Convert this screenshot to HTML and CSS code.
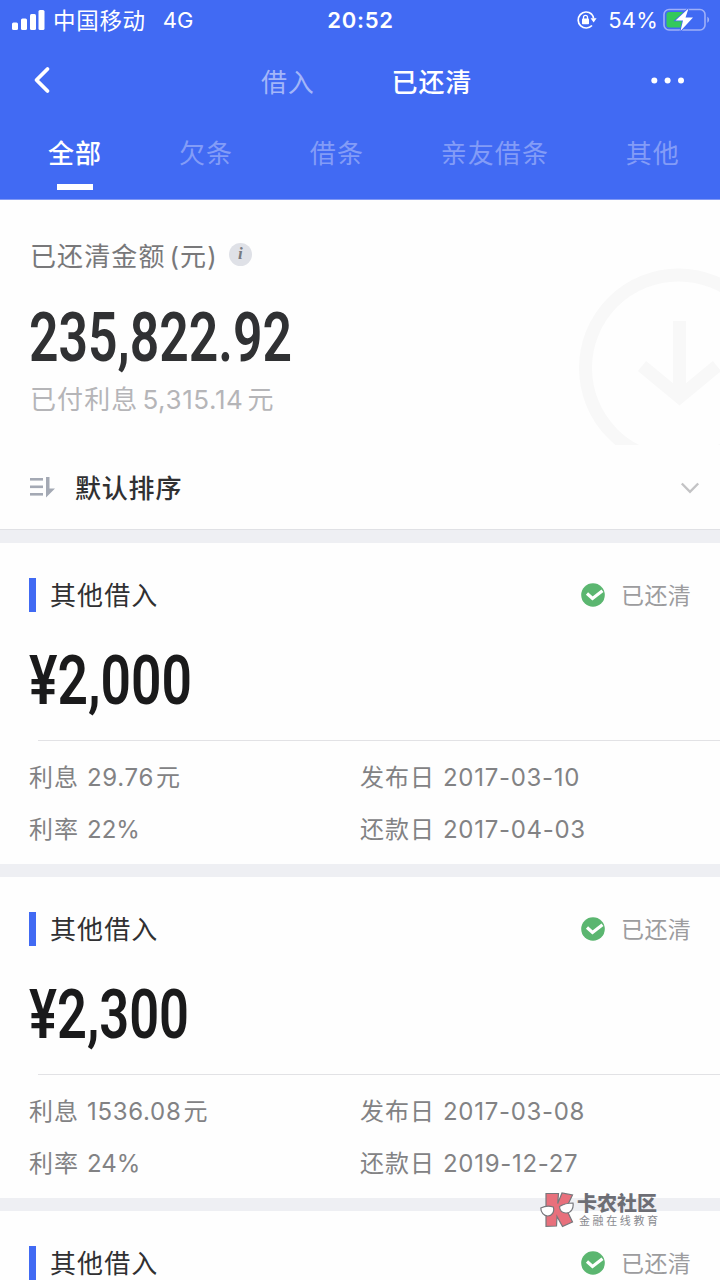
FILE: index.html
```html
<!DOCTYPE html>
<html lang="zh-CN">
<head>
<meta charset="utf-8">
<title>已还清</title>
<link rel="stylesheet" href="styles.css">
</head>
<body>
<div class="screen">
  <header class="header">
    <div class="status">
      <div class="status-left">
        <svg class="signal" width="33" height="21" viewBox="0 0 33 21"><g fill="#fff"><rect x="0" y="12.500" width="6" height="7.500" rx="1.500"/><rect x="9" y="8.500" width="6" height="11.500" rx="1.500"/><rect x="18" y="4" width="6" height="16" rx="1.500"/><rect x="26.500" y="0" width="6" height="20" rx="1.500"/></g></svg>
        <span class="carrier">中国移动</span><span class="net">4G</span>
      </div>
      <div class="clock">20:52</div>
      <div class="status-right">
        <svg width="21" height="20" viewBox="0 0 21 20"><path d="M15.500 4A8 8 0 1 0 16 15.500M15.500 4A8 8 0 0 1 17.600 8.500" fill="none" stroke="#fff" stroke-width="1.700"/><path d="M14.600 8.300h6l-3 4.200z" fill="#fff"/><rect x="6" y="8.600" width="7" height="5.600" rx=".8" fill="#fff"/><path d="M7.500 9V7.300a2 2 0 0 1 4 0V9" fill="none" stroke="#fff" stroke-width="1.300"/></svg>
        <span class="percent">54%</span>
        <svg width="48" height="24" viewBox="0 0 48 24"><rect x="1" y="1.500" width="41" height="20.500" rx="5" fill="none" stroke="#9fb0f8" stroke-width="1.600"/><path d="M44.300 8.800c2.400.8 2.400 5.200 0 6z" fill="#9fb0f8"/><rect x="3.500" y="4" width="17.500" height="15.500" rx="2.500" fill="#34c95c"/><path d="M25.500 .5L12.500 12.500h7.500L17.500 23 30 9.500h-7.500z" fill="#fff" stroke="#416af3" stroke-width="1.600" paint-order="stroke"/></svg>
      </div>
    </div>
    <nav class="nav">
      <svg class="back" width="18" height="28" viewBox="0 0 18 28"><path d="M14.500 3L3.500 14l11 11" fill="none" stroke="#fff" stroke-width="3.800" stroke-linecap="round" stroke-linejoin="round"/></svg>
      <div class="nav-titles"><span class="nav-item">借入</span><span class="nav-item active">已还清</span></div>
      <svg class="more" width="34" height="8" viewBox="0 0 34 8"><g fill="#fff"><circle cx="3.300" cy="4.500" r="3"/><circle cx="16.600" cy="4.500" r="3"/><circle cx="30" cy="4.500" r="3"/></g></svg>
    </nav>
    <div class="tabs"><span class="tab on">全部</span><span class="tab">欠条</span><span class="tab">借条</span><span class="tab">亲友借条</span><span class="tab">其他</span></div>
  </header>

  <section class="summary">
    <svg class="summary-art" width="142" height="178" viewBox="0 0 142 178"><g fill="none" stroke="#f8f8f8" stroke-width="13"><circle cx="100.500" cy="101" r="93"/><path d="M101.500 54v77M64 99l37.500 31L139 99"/></g></svg>
    <div class="summary-label"><span>已还清金额</span><span class="unit">(元)</span><span class="info">i</span></div>
    <svg class="total" width="290" height="98" viewBox="0 0 290 98"><text x="4" y="71" textLength="263" lengthAdjust="spacingAndGlyphs">235,822.92</text></svg>
    <div class="paid"><span>已付利息</span><span class="paid-num">5,315.14</span><span>元</span></div>
  </section>

  <div class="sort">
    <svg width="28" height="22" viewBox="0 0 28 22"><g fill="#a4a9b4"><rect x="1" y="1" width="13" height="2.600"/><rect x="1" y="8.500" width="13" height="2.600"/><rect x="1" y="16" width="13" height="2.600"/><path d="M17 0h3.500v11.500H26L17 20.500z"/></g></svg>
    <span class="sort-name">默认排序</span>
    <svg class="chev" width="20" height="14" viewBox="0 0 20 14"><path d="M1.800 2.500L10 10.800l8.200-8.300" fill="none" stroke="#c3c3c5" stroke-width="2.400"/></svg>
  </div>

  <main class="list">
    <article class="card">
      <div class="card-head"><span class="bar"></span><span class="card-title">其他借入</span>
        <svg width="25" height="25" viewBox="0 0 25 25"><circle cx="12" cy="12" r="11.800" fill="#5bb670"/><path d="M6 10.500l5.500 5 10-7.800" fill="none" stroke="#fff" stroke-width="3.200"/></svg>
        <span class="state">已还清</span></div>
      <svg class="amount" width="240" height="119" viewBox="0 0 240 119"><text x="4" y="83" textLength="163" lengthAdjust="spacingAndGlyphs">¥2,000</text></svg>
      <div class="details">
        <div>利息<span class="num">29.76</span>元</div><div>发布日<span class="num">2017-03-10</span></div>
        <div>利率<span class="num pct">22%</span></div><div>还款日<span class="num">2017-04-03</span></div>
      </div>
    </article>
    <article class="card">
      <div class="card-head"><span class="bar"></span><span class="card-title">其他借入</span>
        <svg width="25" height="25" viewBox="0 0 25 25"><circle cx="12" cy="12" r="11.800" fill="#5bb670"/><path d="M6 10.500l5.500 5 10-7.800" fill="none" stroke="#fff" stroke-width="3.200"/></svg>
        <span class="state">已还清</span></div>
      <svg class="amount" width="240" height="119" viewBox="0 0 240 119"><text x="4" y="83" textLength="160" lengthAdjust="spacingAndGlyphs">¥2,300</text></svg>
      <div class="details">
        <div>利息<span class="num">1536.08</span>元</div><div>发布日<span class="num">2017-03-08</span></div>
        <div>利率<span class="num pct">24%</span></div><div>还款日<span class="num">2019-12-27</span></div>
      </div>
    </article>
    <article class="card">
      <div class="card-head"><span class="bar"></span><span class="card-title">其他借入</span>
        <svg width="25" height="25" viewBox="0 0 25 25"><circle cx="12" cy="12" r="11.800" fill="#5bb670"/><path d="M6 10.500l5.500 5 10-7.800" fill="none" stroke="#fff" stroke-width="3.200"/></svg>
        <span class="state">已还清</span></div>
    </article>
  </main>

  <div class="watermark">
    <svg width="34" height="36" viewBox="0 0 34 36"><path d="M6 1.500h12.500l-.8 10L22 1l10.500 2-6.500 13.500L32.500 30l-10 4.500-5.500-10-.5 9.500-10.500.3z" fill="#e8707c" stroke="#77777c" stroke-width="1.200"/><path d="M.8 16c4-2 8-2.500 12.500-1 1.500 5-1.500 9-5.500 9S.8 20.500.8 16zM19.500 14.500c4-2.500 8.500-3.500 13.500-3.500.8 5-1.500 9.500-6.500 10-4.500.3-7-2.500-7-6.500z" fill="#fff" stroke="#77777c" stroke-width="1.200"/></svg>
    <div class="wm-text"><span class="wm-name">卡农社区</span><span class="wm-sub">金融在线教育</span></div>
  </div>
</div>
</body>
</html>
```
FILE: styles.css
```css
* { box-sizing: border-box; }
body {
  margin: 0;
  font-family: Inter, "Noto Sans CJK SC", sans-serif;
  background: #fefefe;
}
svg { display: block; flex: none; }
.screen {
  position: relative;
  width: 720px;
  height: 1280px;
  overflow: hidden;
  white-space: nowrap;
}
.header { height: 200px; background: #416af3; color: #fff; border-bottom: 1px solid #8299f4; }

.status {
  height: 40px;
  display: grid;
  grid-template-columns: 1fr auto 1fr;
  align-items: center;
  padding: 0 9px 0 12px;
}
.status-left { display: flex; align-items: center; font-size: 22.500px; }
.carrier { margin-left: 8px; padding-bottom: 2px; letter-spacing: .7px; }
.net { margin-left: 17px; font-size: 22px; }
.clock { margin-left: -2px; font-size: 22px; font-weight: 600; letter-spacing: .7px; }
.status-right { display: flex; align-items: center; justify-content: flex-end; }
.percent { margin: 0 5px 0 11px; font-size: 22px; letter-spacing: .2px; }

.nav { height: 80px; display: flex; align-items: center; padding: 0 35px 0 33px; }
.nav-titles { flex: 1; display: flex; gap: 77px; padding-left: 210px; }
.nav-item { font-size: 26px; letter-spacing: .8px; color: #a3b6f9; }
.nav-item.active { color: #fff; font-weight: 500; }

.tabs {
  height: 79px;
  display: flex;
  justify-content: space-between;
  padding: 13px 40px 0 48px;
}
.tab {
  position: relative;
  height: 42px;
  line-height: 42px;
  font-size: 26px;
  letter-spacing: 1.100px;
  color: #839cf7;
}
.tab.on { color: #fff; font-weight: 500; }
.tab.on::after {
  content: "";
  position: absolute;
  left: 9px;
  top: 51px;
  width: 36px;
  height: 6px;
  background: #fff;
}

.summary { position: relative; height: 245px; padding: 35px 0 0 30px; }
.summary-art { position: absolute; right: 0; top: 67px; }
.summary-label {
  height: 39px;
  display: flex;
  align-items: center;
  font-size: 26px;
  letter-spacing: 1.100px;
  color: #78787a;
}
.unit { margin-left: 4px; }
.info {
  width: 23px;
  height: 23px;
  margin-left: 11px;
  border-radius: 50%;
  background: #dfe1e7;
  color: #77797f;
  font: italic bold 17px/22px "Liberation Serif", serif;
  letter-spacing: 0;
  text-align: center;
}
.total { margin: 16px 0 0 -5px; }
.total text, .amount text { font-family: Roboto, sans-serif; font-size: 69px; font-weight: 600; fill: #303133; }
.amount text { fill: #1a1a1b; }
.paid {
  height: 40px;
  margin-top: -8px;
  line-height: 40px;
  font-size: 26px;
  letter-spacing: 1.100px;
  color: #b5b5b8;
}
.paid-num { margin: 0 4px 0 4px; letter-spacing: .6px; }

.sort {
  height: 85px;
  display: flex;
  align-items: center;
  padding: 2px 20px 0 29px;
  border-bottom: 1px solid #e0e1e5;
}
.sort-name { flex: 1; margin-left: 18px; padding-bottom: 3px; font-size: 26px; letter-spacing: .8px; font-weight: 500; color: #303032; }

.list {
  display: flex;
  flex-direction: column;
  gap: 13px;
  padding-top: 13px;
  background: #eeeff3;
}
.card { height: 321px; padding-top: 26px; background: #fefefe; }
.card-head { height: 52px; display: flex; align-items: center; padding: 0 29px; }
.bar { width: 7px; height: 34px; background: #416af3; }
.card-title { flex: 1; margin-left: 14px; padding-bottom: 3px; font-size: 26px; letter-spacing: 1.100px; color: #303032; }
.state { width: 70px; margin-left: 14px; padding-bottom: 2px; font-size: 23px; letter-spacing: .4px; color: #9c9c9e; }
.card-head svg { margin-right: 1px; }
.amount { margin-left: 25px; }
.details {
  height: 123px;
  margin-left: 38px;
  border-top: 1px solid #e2e2e5;
  display: grid;
  grid-template-columns: 331px 1fr;
  grid-auto-rows: 52px;
  align-items: center;
  padding-top: 8px;
  font-size: 24px;
  letter-spacing: 1px;
  color: #828284;
}
.details > div { margin-left: -9px; }
.num { margin: 0 2px 0 8px; letter-spacing: .7px; }
.num.pct { letter-spacing: 0; }

.watermark {
  position: absolute;
  left: 540px;
  top: 1192px;
  display: flex;
  gap: 3px;
  color: #6d6e75;
}
.wm-text { display: flex; flex-direction: column; padding-top: 1px; }
.wm-name { font-size: 20px; line-height: 22px; font-weight: 900; }
.wm-sub { margin-left: 2px; font-size: 11px; line-height: 13px; letter-spacing: 2.600px; color: #88898e; }
```
